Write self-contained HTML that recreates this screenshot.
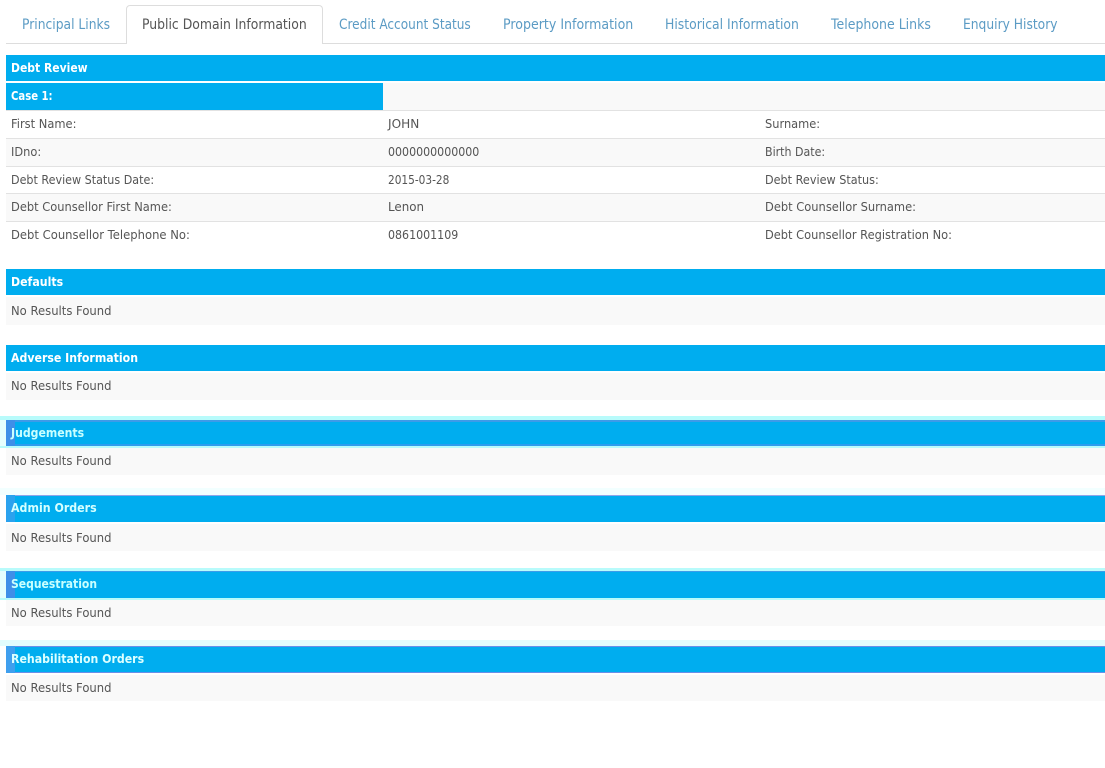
<!DOCTYPE html>
<html><head><meta charset="utf-8"><style>
html,body{margin:0;padding:0;background:#fff;width:1105px;height:768px;overflow:hidden}
body{position:relative;font-family:"DejaVu Sans","Liberation Sans",sans-serif;font-size:12px;color:#555}
div{position:absolute;box-sizing:border-box}
.t{white-space:nowrap;line-height:16px;height:16px}
.tab{color:#5b9bc4;font-size:14px;line-height:20px;height:20px;white-space:nowrap;top:15px;transform-origin:0 50%}
.bar{left:6px;width:1099px;background:#00adef}
.hd{left:11px;color:#fff;font-weight:bold;font-size:12px;white-space:nowrap;line-height:16px;height:16px;transform-origin:0 50%}
.row{left:6px;width:1099px;background:#f9f9f9}
.ln{left:6px;width:1099px;height:1px;background:#e2e2e2}
.s{transform-origin:0 50%}
.gl{left:0;width:1105px}
</style></head><body>
<div style="left:6px;top:43px;width:1099px;height:1px;background:#ddd"></div>
<div style="left:126px;top:5px;width:197px;height:39px;background:#fff;border:1px solid #ddd;border-bottom:none;border-radius:4px 4px 0 0"></div>
<div class="tab" style="left:22px;transform:scaleX(.88)">Principal Links</div>
<div class="tab" style="left:142px;color:#555;transform:scaleX(.887)">Public Domain Information</div>
<div class="tab" style="left:339px;transform:scaleX(.866)">Credit Account Status</div>
<div class="tab" style="left:503px;transform:scaleX(.9)">Property Information</div>
<div class="tab" style="left:665px;transform:scaleX(.886)">Historical Information</div>
<div class="tab" style="left:831px;transform:scaleX(.896)">Telephone Links</div>
<div class="tab" style="left:963px;transform:scaleX(.878)">Enquiry History</div>

<div class="bar" style="top:55px;height:26px"></div>
<div class="hd" style="top:60px;transform:scaleX(.9)">Debt Review</div>
<div class="row" style="top:83px;height:27px"></div>
<div class="bar" style="top:83px;height:27px;width:377px"></div>
<div class="hd" style="top:88px;transform:scaleX(.84)">Case 1:</div>
<div class="ln" style="top:110px"></div>

<div class="row" style="top:139px;height:27px"></div>
<div class="row" style="top:194px;height:27px"></div>
<div class="ln" style="top:138px"></div>
<div class="ln" style="top:166px"></div>
<div class="ln" style="top:193px"></div>
<div class="ln" style="top:221px"></div>

<div class="t s" style="left:11px;top:116px;transform:scaleX(.955)">First Name:</div>
<div class="t s" style="left:388px;top:116px;transform:scaleX(1.01)">JOHN</div>
<div class="t s" style="left:765px;top:116px;transform:scaleX(.95)">Surname:</div>
<div class="t s" style="left:11px;top:144px;transform:scaleX(.95)">IDno:</div>
<div class="t s" style="left:388px;top:144px;transform:scaleX(.92)">0000000000000</div>
<div class="t s" style="left:765px;top:144px;transform:scaleX(.92)">Birth Date:</div>
<div class="t s" style="left:11px;top:172px;transform:scaleX(.928)">Debt Review Status Date:</div>
<div class="t s" style="left:388px;top:172px;transform:scaleX(.88)">2015-03-28</div>
<div class="t s" style="left:765px;top:172px;transform:scaleX(.935)">Debt Review Status:</div>
<div class="t s" style="left:11px;top:199px;transform:scaleX(.954)">Debt Counsellor First Name:</div>
<div class="t s" style="left:388px;top:199px;transform:scaleX(.99)">Lenon</div>
<div class="t s" style="left:765px;top:199px;transform:scaleX(.955)">Debt Counsellor Surname:</div>
<div class="t s" style="left:11px;top:227px;transform:scaleX(.966)">Debt Counsellor Telephone No:</div>
<div class="t s" style="left:388px;top:227px;transform:scaleX(.92)">0861001109</div>
<div class="t s" style="left:765px;top:227px;transform:scaleX(.951)">Debt Counsellor Registration No:</div>

<div class="bar" style="top:269px;height:26px"></div>
<div class="hd" style="top:274px;transform:scaleX(.915)">Defaults</div>
<div class="row" style="top:297px;height:28px"></div>
<div class="t s" style="left:11px;top:303px;transform:scaleX(.967)">No Results Found</div>

<div class="bar" style="top:345px;height:26px"></div>
<div class="hd" style="top:350px;transform:scaleX(.915)">Adverse Information</div>
<div class="row" style="top:373px;height:27px"></div>
<div class="t s" style="left:11px;top:378px;transform:scaleX(.967)">No Results Found</div>

<div class="gl" style="top:416px;height:4px;background:#b8fbfb"></div>
<div style="left:0;top:420px;width:6px;height:26px;background:#e6fefe"></div>
<div class="bar" style="top:420px;height:26px;border-top:2px solid #3d9be8;border-bottom:2px solid #2f9cee"></div>
<div style="left:6px;top:420px;width:9px;height:26px;background:#3f8fe8"></div>
<div class="gl" style="top:446px;height:2px;background:#b8fbfb"></div>
<div class="hd" style="top:425px;color:#c8ffff;transform:scaleX(.91)">Judgements</div>
<div class="row" style="top:448px;height:27px"></div>
<div class="t s" style="left:11px;top:453px;transform:scaleX(.967)">No Results Found</div>

<div class="gl" style="top:488px;height:7px;background:#f2ffff"></div>
<div class="bar" style="top:495px;height:27px;border-top:1px solid #8fa5e8"></div>
<div style="left:6px;top:495px;width:9px;height:27px;background:#2ba2ee"></div>
<div class="hd" style="top:500px;color:#d4ffff;transform:scaleX(.92)">Admin Orders</div>
<div class="row" style="top:524px;height:27px"></div>
<div class="t s" style="left:11px;top:530px;transform:scaleX(.967)">No Results Found</div>

<div class="gl" style="top:568px;height:3px;background:#b8fbfb"></div>
<div style="left:0;top:571px;width:6px;height:27px;background:#e6fefe"></div>
<div class="bar" style="top:571px;height:27px;border-top:1px solid #3d9be8"></div>
<div style="left:6px;top:571px;width:9px;height:27px;background:#3f8fe8"></div>
<div class="gl" style="top:598px;height:2px;background:#b8fbfb"></div>
<div class="hd" style="top:576px;color:#c8ffff;transform:scaleX(.9)">Sequestration</div>
<div class="row" style="top:600px;height:26px"></div>
<div class="t s" style="left:11px;top:605px;transform:scaleX(.967)">No Results Found</div>

<div class="gl" style="top:640px;height:6px;background:#e2fdfd"></div>
<div class="bar" style="top:646px;height:27px;border-top:1px solid #6a8fe8;border-bottom:1px solid #6a8fe8"></div>
<div style="left:6px;top:646px;width:9px;height:27px;background:#3f9fee"></div>
<div class="hd" style="top:651px;color:#dcffff;transform:scaleX(.915)">Rehabilitation Orders</div>
<div class="row" style="top:675px;height:26px"></div>
<div class="t s" style="left:11px;top:680px;transform:scaleX(.967)">No Results Found</div>
</body></html>
